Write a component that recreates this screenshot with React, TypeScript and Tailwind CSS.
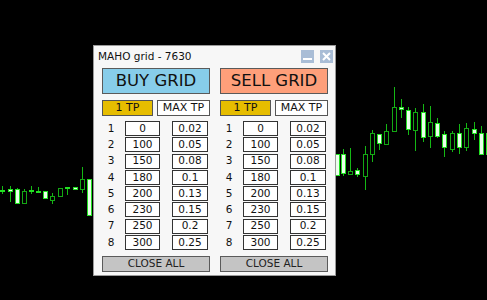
import React from 'react'

type Candle = [number, number, number, number, number, boolean]

// [center x, wick top, wick bottom, body top, body bottom, filled]
const candles: Candle[] = [
  [2, 186, 194, 190, 191, true],
  [10, 186, 202, 189, 191, true],
  [17, 188, 203, 189, 203, true],
  [24, 189, 203, 191, 203, false],
  [31, 186, 194, 190, 191, true],
  [38, 187, 193, 191, 192, true],
  [45, 191, 198, 191, 198, true],
  [52, 193, 204, 196, 200, false],
  [60, 188, 196, 188, 196, false],
  [67, 187, 195, 187, 188, true],
  [75, 187, 190, 187, 189, true],
  [82, 167, 193, 179, 189, false],
  [89, 179, 215, 179, 215, true],
  [337, 154, 175, 154, 175, true],
  [343, 149, 176, 154, 173, true],
  [350, 148, 174, 171, 174, false],
  [357, 168, 177, 170, 174, true],
  [365, 146, 190, 154, 176, false],
  [372, 130, 162, 133, 154, false],
  [379, 134, 150, 134, 143, true],
  [386, 124, 144, 131, 144, false],
  [394, 87, 132, 107, 131, false],
  [401, 99, 118, 107, 109, true],
  [408, 107, 135, 110, 129, true],
  [415, 108, 151, 112, 130, false],
  [423, 104, 142, 112, 137, true],
  [430, 106, 148, 122, 136, false],
  [437, 118, 138, 123, 136, true],
  [444, 131, 157, 134, 147, true],
  [452, 131, 152, 133, 149, false],
  [459, 124, 154, 133, 147, true],
  [466, 123, 151, 128, 147, false],
  [474, 122, 140, 129, 133, true],
  [481, 126, 154, 133, 154, true],
  [488, 133, 154, 133, 154, true],
]

const levels = [
  ['0', '0.02'],
  ['100', '0.05'],
  ['150', '0.08'],
  ['180', '0.1'],
  ['200', '0.13'],
  ['230', '0.15'],
  ['250', '0.2'],
  ['300', '0.25'],
]

function Chart() {
  return (
    <svg className="absolute inset-0" width={487} height={300} viewBox="0 0 487 300">
      {candles.map(([x, wt, wb, bt, bb, filled], i) => (
        <g key={i}>
          <line x1={x + 0.5} x2={x + 0.5} y1={wt} y2={wb} stroke="#14b814" strokeWidth={1} />
          <rect
            x={x - 1.5}
            y={bt + 0.5}
            width={4}
            height={Math.max(bb - bt, 1)}
            fill={filled ? '#eaffea' : '#000'}
            stroke={filled ? '#22e022' : '#14a814'}
            strokeWidth={1}
          />
        </g>
      ))}
    </svg>
  )
}

function GridColumn({ label, color }: { label: string; color: string }) {
  return (
    <div className="flex flex-col w-[108px]">
      <div className={`h-[26px] flex items-center justify-center border border-[#5a5a5a] text-[16.5px] text-[#111] ${color}`}>
        {label}
      </div>
      <div className="flex gap-[4px] mt-[6px]">
        <div className="w-[51px] h-[16px] flex items-center justify-center border border-[#555] bg-[#e6bd00] text-[11px] text-[#111]">
          1 TP
        </div>
        <div className="w-[53px] h-[16px] flex items-center justify-center border border-[#555] bg-white text-[11px] text-[#111]">
          MAX TP
        </div>
      </div>
      <div className="flex flex-col mt-[5px] gap-[1.3px]">
        {levels.map(([pts, lot], i) => (
          <div key={i} className="flex items-center h-[15px]">
            <span className="w-[18px] text-center text-[10.5px] text-[#111]">{i + 1}</span>
            <div className="ml-[5px] w-[35px] h-[15px] flex items-center justify-center border border-[#333] bg-white text-[10.5px] text-[#111]">
              {pts}
            </div>
            <div className="ml-[12px] w-[36px] h-[15px] flex items-center justify-center border border-[#333] bg-white text-[10.5px] text-[#111]">
              {lot}
            </div>
          </div>
        ))}
      </div>
      <div className="mt-[6px] h-[16px] flex items-center justify-center border border-[#5a5a5a] bg-[#c4c4c4] text-[10.5px] text-[#222]">
        CLOSE ALL
      </div>
    </div>
  )
}

export default function App() {
  return (
    <div className="relative w-[487px] h-[300px] bg-black overflow-hidden font-['DejaVu_Sans',sans-serif]">
      <Chart />
      <div className="absolute left-[93px] top-[45px] w-[243px] h-[231px] bg-[#f7f7f7] border border-[#9a9a9a] flex flex-col">
        {/* Title bar */}
        <div className="flex items-center justify-between h-[21px] pl-[4px] pr-[2px]">
          <span className="text-[10.5px] text-[#111]">MAHO grid - 7630</span>
          <div className="flex gap-[6px]">
            <div className="w-[13px] h-[13px] bg-[#a9bdd6] flex items-end justify-center pb-[3px]">
              <div className="w-[9px] h-[2px] bg-white" />
            </div>
            <div className="w-[13px] h-[13px] bg-[#a9bdd6] flex items-center justify-center">
              <svg width="9" height="9" viewBox="0 0 9 9">
                <path d="M1 1 L8 8 M8 1 L1 8" stroke="#fff" strokeWidth="2" />
              </svg>
            </div>
          </div>
        </div>
        <div className="flex gap-[10px] pl-[8px] pt-[1px]">
          <GridColumn label="BUY GRID" color="bg-[#87cdea]" />
          <GridColumn label="SELL GRID" color="bg-[#fe9f7a]" />
        </div>
      </div>
    </div>
  )
}
